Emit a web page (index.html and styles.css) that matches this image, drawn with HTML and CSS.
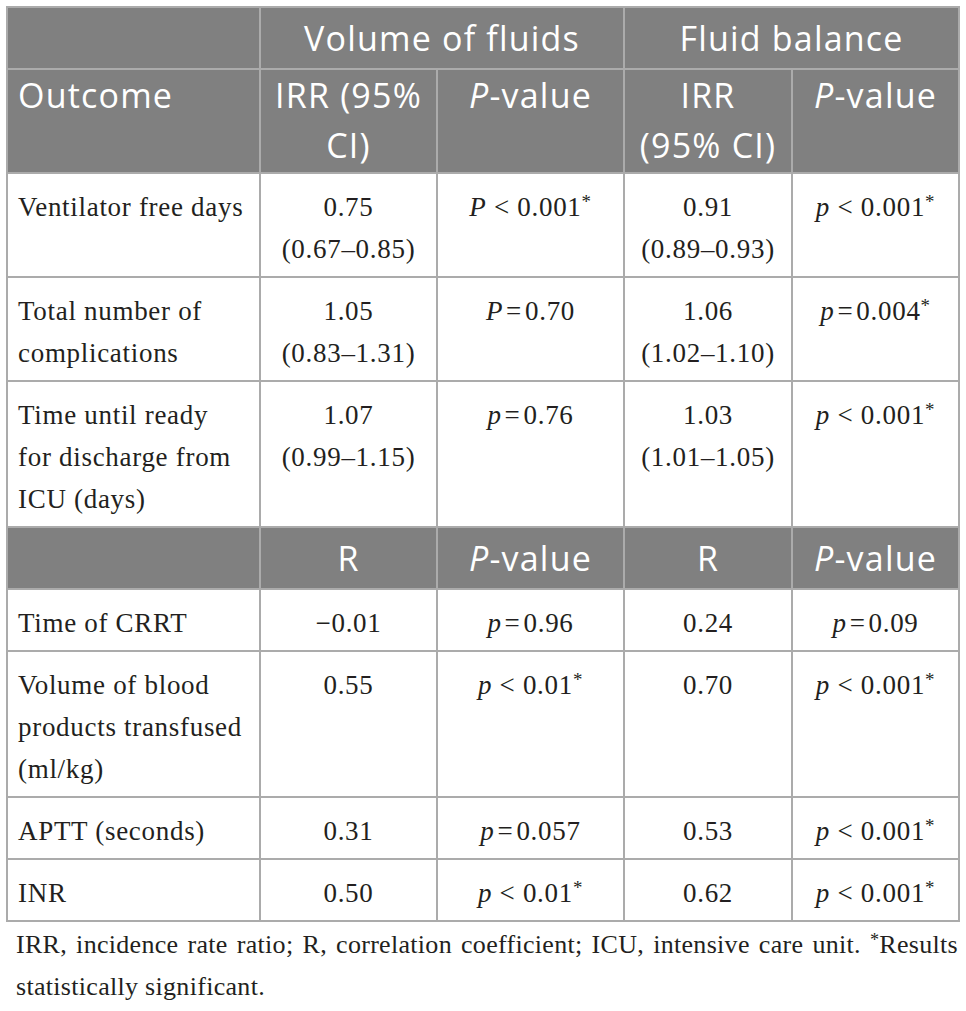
FILE: index.html
```html
<!DOCTYPE html>
<html lang="en">
<head>
  <meta charset="UTF-8">
  <meta name="viewport" content="width=device-width, initial-scale=1.0">
  <title>Fluids and outcomes</title>
  <link rel="stylesheet" href="styles.css">
</head>
<body>
  <div class="wrap">
    <table class="results">
      <colgroup>
        <col class="c-outcome">
        <col class="c-irr">
        <col class="c-p">
        <col class="c-irr2">
        <col class="c-p2">
      </colgroup>
      <thead>
        <tr class="single">
          <th></th>
          <th colspan="2">Volume of fluids</th>
          <th colspan="2">Fluid balance</th>
        </tr>
        <tr class="double">
          <th class="left">Outcome</th>
          <th>IRR (95%<br>CI)</th>
          <th><i>P</i>-value</th>
          <th>IRR<br>(95% CI)</th>
          <th><i>P</i>-value</th>
        </tr>
      </thead>
      <tbody>
        <tr>
          <td>Ventilator free days</td>
          <td>0.75<br>(0.67–0.85)</td>
          <td><i>P</i> &lt; 0.001<sup>*</sup></td>
          <td>0.91<br>(0.89–0.93)</td>
          <td><i>p</i> &lt; 0.001<sup>*</sup></td>
        </tr>
        <tr>
          <td>Total number of<br>complications</td>
          <td>1.05<br>(0.83–1.31)</td>
          <td><i>P</i>&#8202;=&#8202;0.70</td>
          <td>1.06<br>(1.02–1.10)</td>
          <td><i>p</i>&#8202;=&#8202;0.004<sup>*</sup></td>
        </tr>
        <tr>
          <td>Time until ready<br>for discharge from<br>ICU (days)</td>
          <td>1.07<br>(0.99–1.15)</td>
          <td><i>p</i>&#8202;=&#8202;0.76</td>
          <td>1.03<br>(1.01–1.05)</td>
          <td><i>p</i> &lt; 0.001<sup>*</sup></td>
        </tr>
      </tbody>
      <thead>
        <tr class="single">
          <th></th>
          <th>R</th>
          <th><i>P</i>-value</th>
          <th>R</th>
          <th><i>P</i>-value</th>
        </tr>
      </thead>
      <tbody>
        <tr>
          <td>Time of CRRT</td>
          <td>−0.01</td>
          <td><i>p</i>&#8202;=&#8202;0.96</td>
          <td>0.24</td>
          <td><i>p</i>&#8202;=&#8202;0.09</td>
        </tr>
        <tr>
          <td>Volume of blood<br>products transfused<br>(ml/kg)</td>
          <td>0.55</td>
          <td><i>p</i> &lt; 0.01<sup>*</sup></td>
          <td>0.70</td>
          <td><i>p</i> &lt; 0.001<sup>*</sup></td>
        </tr>
        <tr>
          <td>APTT (seconds)</td>
          <td>0.31</td>
          <td><i>p</i>&#8202;=&#8202;0.057</td>
          <td>0.53</td>
          <td><i>p</i> &lt; 0.001<sup>*</sup></td>
        </tr>
        <tr>
          <td>INR</td>
          <td>0.50</td>
          <td><i>p</i> &lt; 0.01<sup>*</sup></td>
          <td>0.62</td>
          <td><i>p</i> &lt; 0.001<sup>*</sup></td>
        </tr>
      </tbody>
    </table>
    <p class="note">IRR, incidence rate ratio; R, correlation coefficient; ICU, intensive care unit. <sup>*</sup>Results statistically significant.</p>
  </div>
</body>
</html>
```

FILE: styles.css
```css
body {
  margin: 0;
  background: #fff;
  color: #231f20;
}
.wrap {
  padding: 6px 8px 0 6px;
}
.results {
  width: 952px;
  border-collapse: collapse;
  table-layout: fixed;
  font-family: "Liberation Serif", "Times New Roman", serif;
  font-size: 27px;
  letter-spacing: 0.7px;
}
.c-outcome { width: 253px; }
.c-irr { width: 177px; }
.c-p { width: 187px; }
.c-irr2 { width: 168px; }
.c-p2 { width: 167px; }

.results th, .results td {
  border: 2px solid #ababab;
}
.results th {
  background: #808080;
  color: #fff;
  font-family: "Open Sans", "Noto Sans", sans-serif;
  font-weight: normal;
  font-size: 34px;
  letter-spacing: 1.2px;
  line-height: 50px;
  padding: 0 10px 2px;
  text-align: center;
  vertical-align: top;
}
.results tr.single th {
  padding: 5px 10px;
  vertical-align: middle;
}
.results th.left {
  text-align: left;
}
.results td {
  line-height: 42px;
  padding: 12px 10px 6px;
  text-align: center;
  vertical-align: top;
}
.results td:first-child {
  text-align: left;
}
sup {
  font-size: 0.7em;
  line-height: 0;
  vertical-align: 0.4em;
}
.note {
  margin: 2px 0 0 10px;
  width: 942px;
  font-family: "Liberation Serif", "Times New Roman", serif;
  font-size: 26px;
  letter-spacing: 0.3px;
  line-height: 42px;
  text-align: justify;
}
```
